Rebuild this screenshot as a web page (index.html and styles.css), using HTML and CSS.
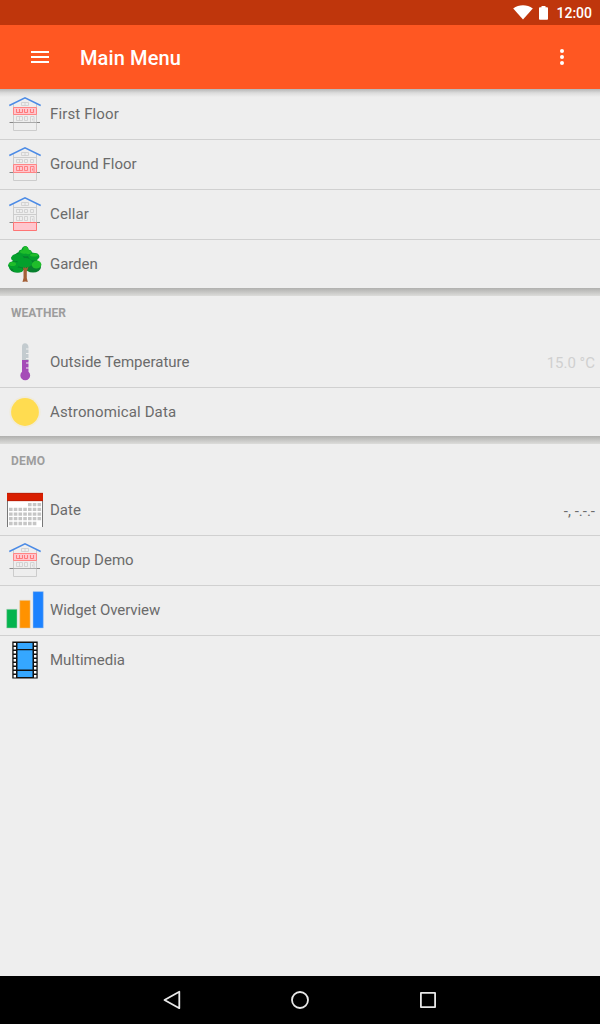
FILE: index.html
```html
<!DOCTYPE html>
<html lang="en">
<head>
<meta charset="utf-8">
<title>Main Menu</title>
<link rel="stylesheet" href="styles.css">
</head>
<body>
<svg class="defs" width="0" height="0">
  <defs>
    <g id="house" fill="none">
      <path d="M8.500 10V36.500H31.500V10M8.500 13.500H31.500M8.500 20.500H31.500" stroke="#ccc"/>
      <path d="M16.500 8.500h7v3h-7zM20 8.500v3M11.500 15.500h6v3h-6zM14.500 15.500v3M19.500 15.500h3v3h-3zM25.500 15.500h3v3h-3zM11.500 22.500h6v4h-6zM14.500 22.500v4M19.500 22.500h3v4h-3zM25.500 28v-5.500h3.500v5.500M27.500 24.500v2" stroke="#cbcbcb" stroke-width=".8"/>
      <path d="M4.500 28.500H8M32 28.500h3" stroke="#888"/>
      <path d="M8 28.500H32" stroke="#aaa"/>
      <path d="M4.300 11.500L20 3.900l15.700 7.600" stroke="#4a8ae6" stroke-width="1.400"/>
    </g>
    <g id="first">
      <use href="#house"/>
      <path d="M8.500 13.500h23v7h-23z" fill="#ffc6cd" stroke="#ff8585"/>
      <path d="M11.500 15v3.500h6V15M14.500 15v3.500M19.500 15v3.500h3V15M25.500 15v3.500h3V15" fill="none" stroke="#ff7070" stroke-width=".9"/>
    </g>
  </defs>
</svg>
<div class="screen">
  <div class="status">
    <svg class="wifi" width="20" height="15" viewBox="0 0 20 15"><path d="M.2 3.500C6-.8 14-.8 19.800 3.500L10 14.500z" fill="#fff"/></svg>
    <svg class="battery" width="9" height="14" viewBox="0 0 9 14"><path d="M0 2.200q0-.9.900-.9H2.500V0h4v1.300h1.600q.9 0 .9.900V13q0 .8-.9.800H.9Q0 13.800 0 13z" fill="#fff"/></svg>
    <span class="clock">12:00</span>
  </div>
  <header class="appbar">
    <svg class="burger" width="18" height="12" viewBox="0 0 18 12"><path d="M0 0h18v2H0zM0 5h18v2H0zM0 10h18v2H0z" fill="#fff"/></svg>
    <h1 class="title">Main Menu</h1>
    <svg class="more" width="4" height="16" viewBox="0 0 4 16"><g fill="#fff"><circle cx="2" cy="2" r="2"/><circle cx="2" cy="8" r="2"/><circle cx="2" cy="14" r="2"/></g></svg>
  </header>
  <main class="content">
    <section class="group first-group">
      <div class="row"><svg class="icon" viewBox="0 0 40 40"><use href="#first"/></svg><span class="label loose">First Floor</span></div>
      <div class="row"><svg class="icon" viewBox="0 0 40 40"><use href="#house"/><path d="M8.500 20.500h23v8h-23z" fill="#ffc6cd" stroke="#ff8585"/><path d="M11.500 22.500h6v4h-6zM14.500 22.500v4M19.500 22.500h3v4h-3zM25.500 28v-5.500h3.500v5.500M27.500 24.500v2" fill="none" stroke="#ff7070" stroke-width=".8"/></svg><span class="label">Ground Floor</span></div>
      <div class="row"><svg class="icon" viewBox="0 0 40 40"><use href="#house"/><path d="M8.500 28.500h23v8h-23z" fill="#ffc6cd" stroke="#ff7474"/></svg><span class="label loose">Cellar</span></div>
      <div class="row"><svg class="icon" viewBox="0 0 40 40">
        <g fill="#07802d"><ellipse cx="20" cy="13" rx="11" ry="6"/><ellipse cx="12" cy="23" rx="8" ry="5.500"/><ellipse cx="28" cy="23" rx="8" ry="5.500"/><path d="M9 15h22l5 6-7 5H11l-6-5z"/></g>
        <g fill="#04a02c"><path d="M13.500 10q-.5-4 3-4.500 1-3.500 4-3.500 3 .5 3 3.500 4 .5 3.500 5-7 4-13.500-.5z"/><path d="M6 13.500q2-4 6-3.500 5-.5 7 4-3 4-8 3-5 .5-5-3.500z"/><path d="M23 12q2-4 7-3 4 0 4.500 4-2 4-6 3.500-4 0-5.500-4.500z"/><path d="M3 21.500q1-4.500 5.500-4 4-.5 5.500 3.500-1 4.500-6 4-4.500-.5-5-3.500z"/><path d="M12 19q1-5 8-5 6 0 7.500 4.500-1 5-8 5T12 19z"/><ellipse cx="13" cy="26" rx="5" ry="2.500"/></g>
        <g fill="#1fbd2a"><path d="M14.500 8q1-2 3.500-2 .5-3.500 2.500-4 3 1 3 4 3 .5 3 3-3 2-5.500.5-4 1-6.500-1.500z"/><path d="M26.500 21q1-4 5-4.500 4.500 0 5 4.500-2 4-5.500 3.500-3 0-4.500-3.500z"/><ellipse cx="29" cy="11" rx="4" ry="1.600"/><ellipse cx="7.500" cy="20" rx="3.500" ry="2"/></g>
        <path d="M18 23l1.500 1.500.5-2 1 2 2.500-2-1.700 5v6.500l1 4-2.500-.5-2.800.5 1-4v-7z" fill="#a45f36"/>
      </svg><span class="label snug">Garden</span></div>
    </section>
    <div class="divider"></div>
    <h2 class="heading">WEATHER</h2>
    <section class="group">
      <div class="row"><svg class="icon" viewBox="0 0 40 40">
        <path d="M17 19V5q0-3.700 3-3.700T23.500 5v1.500H21v1h2.500V11H21v1h2.500v4H21v1h2.500v2z" fill="#c3cbcf"/>
        <path d="M17 18h6.500v2.500H21v1h2.500v4H21v1h2.500v3.200a4.900 4.900 0 1 1-6.500 0z" fill="#a54bb7"/>
      </svg><span class="label">Outside Temperature</span><span class="value muted">15.0 °C</span></div>
      <div class="row"><svg class="icon" viewBox="0 0 40 40"><circle cx="20" cy="20" r="15.700" fill="#f0ebdc"/><circle cx="20" cy="20" r="13.900" fill="#ffdc50"/></svg><span class="label loose">Astronomical Data</span></div>
    </section>
    <div class="divider"></div>
    <h2 class="heading demo">DEMO</h2>
    <section class="group">
      <div class="row"><svg class="icon" viewBox="0 0 40 40">
        <path d="M2.500 3.500h35V37h-35z" fill="#fff"/><path d="M2.500 37V3.500M37.500 3.500V37" fill="none" stroke="#777"/><path d="M2 3h36v8H2z" fill="#d91e00"/><path d="M2 3.300h36M2 10.700h36" stroke="#ad1c08" stroke-width=".7"/>
        <path d="M23 14.600h14M4 19.300h33M4 24.100h33M4 28.700h33M4 33.500h28" stroke="#c6c6c6" stroke-width="3.300" stroke-dasharray="3.600 1.150"/>
      </svg><span class="label">Date</span><span class="value dash">-, -.-.-</span></div>
      <div class="row"><svg class="icon" viewBox="0 0 40 40"><use href="#first"/></svg><span class="label">Group Demo</span></div>
      <div class="row"><svg class="icon" viewBox="0 0 40 40"><path d="M1.700 19.300h10.300v18.700H1.700z" fill="#04b44e" stroke="#a8cdb5" stroke-width=".5"/><path d="M14.800 10.400h10.300V38H14.800z" fill="#ff9200" stroke="#e3c69d" stroke-width=".5"/><path d="M28 1.600h10.300V38H28z" fill="#1c82ff" stroke="#a8c4e8" stroke-width=".5"/></svg><span class="label snug">Widget Overview</span></div>
      <div class="row"><svg class="icon" viewBox="0 0 40 40"><path d="M7.300 1.500h25.400v37H7.300z" fill="#111"/><path d="M12.500 3h15v6h-15zM12.500 10.300h15v19.200h-15zM12.500 31h15v6h-15z" fill="#35a7ff"/><path d="M9.800 3v35M30.200 3v35" stroke="#fff" stroke-width="2.400" stroke-dasharray="2.400 1.600"/></svg><span class="label">Multimedia</span></div>
    </section>
  </main>
  <nav class="navbar">
    <svg width="20" height="20" viewBox="0 0 20 20"><path d="M2.500 10L17.300 1.800v16.400z"/></svg>
    <svg width="20" height="20" viewBox="0 0 20 20"><circle cx="10" cy="10" r="8"/></svg>
    <svg width="20" height="20" viewBox="0 0 20 20"><path d="M2.900 2.900h14.200v14.200H2.900z"/></svg>
  </nav>
</div>
</body>
</html>
```

FILE: styles.css
```css
* { box-sizing: border-box; }
body { margin: 0; background: #eee; font-family: Roboto, sans-serif; }
.defs { display: none; }
.screen { display: flex; flex-direction: column; width: 600px; height: 1024px; overflow: hidden; }
.status { display: flex; align-items: center; flex: none; height: 25px; padding-right: 8px; background: #bf360c; color: #fff; }
.wifi { margin-left: auto; }
.battery { margin: 0 8px 0 6px; }
.clock { font-size: 14px; font-weight: 500; line-height: 25px; padding-top: 1px; }
.appbar { display: flex; align-items: center; flex: none; height: 64px; padding: 0 36px 0 31px; background: #ff5722; color: #fff; }
.burger { margin-right: 31px; }
.title { margin: 2px 0 0; font-size: 20px; font-weight: 500; line-height: 24px; letter-spacing: .12px; }
.more { margin-left: auto; }
.content { flex: 1; background: linear-gradient(#b5b5b5, #dcdcdc 4px, #eee 8px) no-repeat 0 0 / 100% 8px; }
.first-group { padding-top: 1px; }
.row { display: flex; align-items: center; height: 50px; padding: 0 5px 1px; border-bottom: 1px solid #d0d0d0; }
.row:last-child { height: 48px; padding-bottom: 0; border-bottom: 0; }
.icon { flex: none; width: 40px; height: 40px; margin-right: 5px; }
.label { font-size: 15px; line-height: 20px; color: #6b6b6b; }
.loose { letter-spacing: .13px; }
.snug { letter-spacing: -.07px; }
.value { margin-left: auto; font-size: 15px; line-height: 20px; }
.muted { color: #d0d0d0; padding-top: 2px; }
.dash { color: #6b6b6b; padding-top: 2px; }
.divider { height: 8px; background: linear-gradient(#b0b0ae, #dcdcda); }
.heading { height: 42px; margin: 0; padding: 9px 11px; font-size: 12px; font-weight: 700; line-height: 16px; color: #9d9d9d; }
.demo { letter-spacing: .2px; }
.navbar { display: flex; justify-content: center; align-items: center; gap: 108px; flex: none; height: 48px; background: #000; }
.navbar svg { fill: none; stroke: #e8e8e8; stroke-width: 1.8; stroke-linejoin: round; }
```
